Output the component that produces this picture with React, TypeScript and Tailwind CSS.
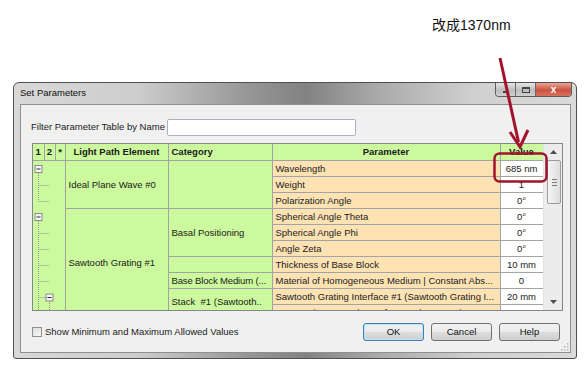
import React from 'react';

const line = 'border border-[#a3a3a3]';
const green = 'bg-[#ccf99d]';
const peach = 'bg-[#fde3b4]';
const param = `${line} ${peach} h-[16px] truncate p-0 px-[3px]`;
const value = `${line} h-[16px] truncate bg-white p-0 text-center`;

function TreeLines() {
  const dot = { stroke: '#8f8f8f', strokeWidth: 1, strokeDasharray: '1 1' };
  return (
    <svg width="32" height="150" className="block">
      <line x1="5.5" y1="12" x2="5.5" y2="40" {...dot} />
      <line x1="5.5" y1="24.5" x2="16" y2="24.5" {...dot} />
      <line x1="5.5" y1="40.5" x2="16" y2="40.5" {...dot} />
      <line x1="5.5" y1="60" x2="5.5" y2="150" {...dot} />
      <line x1="5.5" y1="72.5" x2="16" y2="72.5" {...dot} />
      <line x1="5.5" y1="88.5" x2="16" y2="88.5" {...dot} />
      <line x1="5.5" y1="104.5" x2="16" y2="104.5" {...dot} />
      <line x1="5.5" y1="120.5" x2="16" y2="120.5" {...dot} />
      <line x1="5.5" y1="136.5" x2="13" y2="136.5" {...dot} />
      <line x1="16.5" y1="140" x2="16.5" y2="150" {...dot} />
      {[4.5, 52.5].map((y) => (
        <g key={y}>
          <rect x="2" y={y} width="7" height="7" fill="#f4f4f4" stroke="#8c8c8c" />
          <line x1="3.5" y1={y + 3.5} x2="7.5" y2={y + 3.5} stroke="#333" />
        </g>
      ))}
      <rect x="13" y="133" width="7" height="7" fill="#f4f4f4" stroke="#8c8c8c" />
      <line x1="14.5" y1="136.5" x2="18.5" y2="136.5" stroke="#333" />
    </svg>
  );
}

function Scrollbar() {
  return (
    <div className="flex w-[19px] flex-col border-l border-[#e3e3e3] bg-[#ececec]">
      <div className="flex h-[16px] items-center justify-center">
        <svg width="7" height="4"><polygon points="0,4 3.5,0 7,4" fill="#4d4d4d" /></svg>
      </div>
      <div className="ml-[3px] mr-[1px] flex h-[44px] flex-col items-center justify-center gap-[2px] rounded-[2px] border border-[#9d9d9d] bg-[linear-gradient(90deg,#f4f4f4,#dedede)]">
        <div className="h-px w-[5px] bg-[#7a7a7a]" />
        <div className="h-px w-[5px] bg-[#7a7a7a]" />
        <div className="h-px w-[5px] bg-[#7a7a7a]" />
      </div>
      <div className="flex-1" />
      <div className="flex h-[16px] items-center justify-center">
        <svg width="7" height="4"><polygon points="0,0 3.5,4 7,0" fill="#4d4d4d" /></svg>
      </div>
    </div>
  );
}

function WinButton({ label, primary }: { label: string; primary?: boolean }) {
  return (
    <button
      type="button"
      className={`h-[18px] w-[61px] rounded-[3px] border bg-[linear-gradient(#f2f2f2_0%,#ebebeb_49%,#dddddd_50%,#cfcfcf_100%)] text-[9.5px] text-[#111] ${
        primary ? 'border-[#3c7fb1] shadow-[inset_0_0_0_1px_#b9e6fa]' : 'border-[#707070]'
      }`}
    >
      {label}
    </button>
  );
}

function ParamTable() {
  return (
    <table className="w-[510px] table-fixed border-collapse text-[9.5px] leading-[15px] text-[#1a1a1a]">
      <colgroup>
        <col className="w-[11px]" />
        <col className="w-[11px]" />
        <col className="w-[10px]" />
        <col className="w-[103px]" />
        <col className="w-[104px]" />
        <col className="w-[228px]" />
        <col className="w-[43px]" />
      </colgroup>
      <thead>
        <tr className={`h-[16px] ${green} font-bold`}>
          <th className="border-r border-b border-[#a3a3a3] p-0">1</th>
          <th className={`${line} border-t-0 p-0`}>2</th>
          <th className={`${line} border-t-0 p-0`}>*</th>
          <th className={`${line} border-t-0 p-0`}>Light Path Element</th>
          <th className={`${line} border-t-0 p-0 px-[3px] text-left`}>Category</th>
          <th className={`${line} border-t-0 p-0`}>Parameter</th>
          <th className={`${line} border-t-0 p-0`}>Value</th>
        </tr>
      </thead>
      <tbody>
        <tr className="h-[16px]">
          <td rowSpan={10} colSpan={3} className={`border-r border-[#a3a3a3] ${green} p-0 align-top`}>
            <TreeLines />
          </td>
          <td rowSpan={3} className={`${line} ${green} truncate p-0 px-[3px]`}>Ideal Plane Wave #0</td>
          <td rowSpan={3} className={`${line} ${green} p-0`} />
          <td className={param}>Wavelength</td>
          <td className={value}>685 nm</td>
        </tr>
        <tr className="h-[16px]">
          <td className={param}>Weight</td>
          <td className={value}>1</td>
        </tr>
        <tr className="h-[16px]">
          <td className={param}>Polarization Angle</td>
          <td className={value}>0°</td>
        </tr>
        <tr className="h-[16px]">
          <td rowSpan={7} className={`${line} ${green} truncate p-0 px-[3px] pt-[46px] align-top`}>Sawtooth Grating #1</td>
          <td rowSpan={3} className={`${line} ${green} truncate p-0 px-[3px]`}>Basal Positioning</td>
          <td className={param}>Spherical Angle Theta</td>
          <td className={value}>0°</td>
        </tr>
        <tr className="h-[16px]">
          <td className={param}>Spherical Angle Phi</td>
          <td className={value}>0°</td>
        </tr>
        <tr className="h-[16px]">
          <td className={param}>Angle Zeta</td>
          <td className={value}>0°</td>
        </tr>
        <tr className="h-[16px]">
          <td className={`${line} ${green} p-0`} />
          <td className={param}>Thickness of Base Block</td>
          <td className={value}>10 mm</td>
        </tr>
        <tr className="h-[16px]">
          <td className={`${line} ${green} truncate p-0 pl-[3px] tracking-[-0.15px]`}>Base Block Medium (...</td>
          <td className={param}>Material of Homogeneous Medium | Constant Abs...</td>
          <td className={value}>0</td>
        </tr>
        <tr className="h-[16px]">
          <td rowSpan={2} className={`${line} ${green} truncate p-0 px-[3px] pt-[5px] align-top`}>Stack&nbsp; #1 (Sawtooth..</td>
          <td className={param}>Sawtooth Grating Interface #1 (Sawtooth Grating I...</td>
          <td className={value}>20 mm</td>
        </tr>
        <tr className="h-[16px]">
          <td className={param}>Symmetric Sawtooth Interface #1 (Symmetric Sawtooth I...</td>
          <td className={value}>20 mm</td>
        </tr>
      </tbody>
    </table>
  );
}

export default function App() {
  return (
    <div className="relative h-[373px] w-[586px] overflow-hidden bg-white font-['Liberation_Sans','Noto_Sans_CJK_SC',sans-serif]">
      <div className="h-[82px] pl-[432px] pt-[16px] text-[14px] leading-[18px] text-[#111]">改成1370nm</div>

      <div className="ml-[13px] flex h-[277px] w-[564px] flex-col rounded-t-[6px] rounded-b-[3px] border border-[#4f4f4f] bg-[linear-gradient(90deg,#d8d8d8_0%,#cdcdcd_22%,#959595_42%,#828282_52%,#a8a8a8_64%,#d0d0d0_82%,#dadada_100%)]">
        <div className="flex h-[21px] items-start justify-between">
          <span className="pl-[6px] pt-[4px] text-[9.5px] leading-[12px] text-[#111]">Set Parameters</span>
          <div className="mr-[4px] flex h-[14px] overflow-hidden rounded-b-[4px] border border-t-0 border-[#5c5c5c]">
            <div className="flex w-[20px] items-end justify-center border-r border-[#6a6a6a] bg-[linear-gradient(#e6e6e6,#bdbdbd_55%,#cfcfcf)] pb-[3px]">
              <div className="h-[2px] w-[6px] bg-[#444]" />
            </div>
            <div className="flex w-[20px] items-center justify-center border-r border-[#6a6a6a] bg-[linear-gradient(#e6e6e6,#bdbdbd_55%,#cfcfcf)]">
              <div className="h-[6px] w-[8px] border border-t-2 border-[#444]" />
            </div>
            <div className="flex w-[35px] items-center justify-center bg-[linear-gradient(#e9a796,#c95340_55%,#d8725f)] text-[10px] font-bold leading-[10px] text-white">
              x
            </div>
          </div>
        </div>

        <div className="relative mr-[5px] mb-[5px] ml-[6px] flex flex-1 flex-col border border-[#8e8f8f] bg-[#f0f0f0]">
          <div className="ml-[10px] mt-[14px] flex items-center gap-[2px] text-[9.5px] text-[#1a1a1a]">
            <span>Filter Parameter Table by Name</span>
            <div className="h-[17px] w-[189px] rounded-[2px] border border-[#abb2bd] bg-white" />
          </div>

          <div className="ml-[11px] mt-[7px] flex h-[168px] w-[531px] overflow-hidden border border-[#828790] bg-white">
            <div className="w-[510px] overflow-hidden">
              <ParamTable />
            </div>
            <Scrollbar />
          </div>

          <div className="mt-[12px] mr-[10px] ml-[11px] flex items-center justify-between">
            <label className="flex items-center gap-[3px] text-[9.5px] text-[#1a1a1a]">
              <span className="h-[10px] w-[10px] border border-[#8e8f8f] bg-[linear-gradient(135deg,#dcdcdc,#f7f7f7)]" />
              Show Minimum and Maximum Allowed Values
            </label>
            <div className="flex gap-[7px]">
              <WinButton label="OK" primary />
              <WinButton label="Cancel" />
              <WinButton label="Help" />
            </div>
          </div>

          <svg width="9" height="9" className="absolute right-[1px] bottom-[1px]">
            {[
              [7, 1],
              [7, 4],
              [4, 4],
              [7, 7],
              [4, 7],
              [1, 7],
            ].map(([x, y]) => (
              <rect key={`${x}-${y}`} x={x} y={y} width="1.5" height="1.5" fill="#b5b5b5" />
            ))}
          </svg>
        </div>
      </div>

      <svg width="586" height="373" className="pointer-events-none absolute top-0 left-0">
        <line x1="500" y1="58" x2="518.5" y2="142" stroke="#a3132c" strokeWidth="3" />
        <polyline points="510,132 520,147 528,130" fill="none" stroke="#a3132c" strokeWidth="3" />
        <rect x="494.5" y="153.5" width="52" height="28" rx="5" fill="none" stroke="#a3132c" strokeWidth="2.5" />
      </svg>
    </div>
  );
}
